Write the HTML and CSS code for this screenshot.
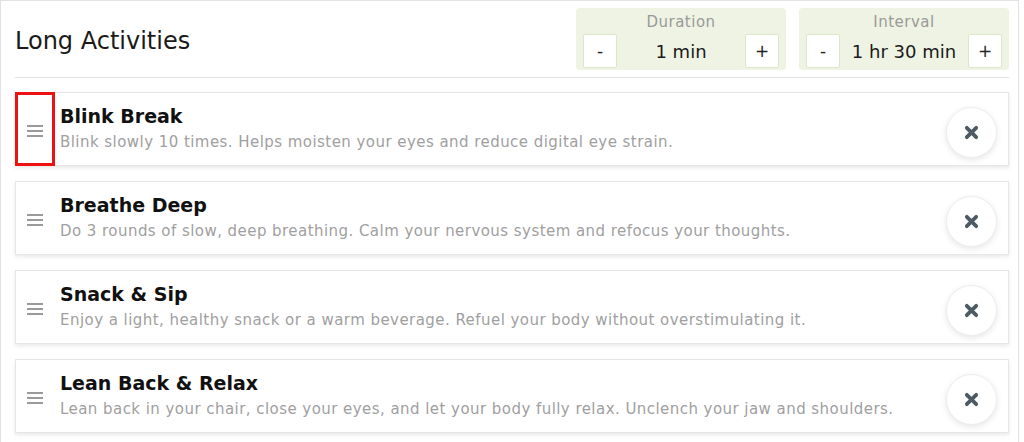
FILE: index.html
```html
<!DOCTYPE html>
<html lang="en">
<head>
<meta charset="utf-8">
<title>Long Activities</title>
<link rel="stylesheet" href="styles.css">
</head>
<body>
<section class="panel">
  <header class="panel-head">
    <h2 class="panel-title">Long Activities</h2>
    <div class="controls">
      <div class="stepper">
        <div class="stepper-label">Duration</div>
        <div class="stepper-row">
          <button class="step-btn">-</button>
          <span class="stepper-value">1 min</span>
          <button class="step-btn">+</button>
        </div>
      </div>
      <div class="stepper">
        <div class="stepper-label">Interval</div>
        <div class="stepper-row">
          <button class="step-btn">-</button>
          <span class="stepper-value">1 hr 30 min</span>
          <button class="step-btn">+</button>
        </div>
      </div>
    </div>
  </header>

  <ul class="activity-list">
    <li class="activity">
      <div class="handle is-focused"><span class="bars"></span></div>
      <div class="activity-body">
        <div class="activity-name">Blink Break</div>
        <div class="activity-desc">Blink slowly 10 times. Helps moisten your eyes and reduce digital eye strain.</div>
      </div>
      <button class="remove" aria-label="Remove">
        <svg viewBox="0 0 16 16" width="15" height="15"><path d="M3 3 L13 13 M13 3 L3 13" /></svg>
      </button>
    </li>
    <li class="activity">
      <div class="handle"><span class="bars"></span></div>
      <div class="activity-body">
        <div class="activity-name">Breathe Deep</div>
        <div class="activity-desc">Do 3 rounds of slow, deep breathing. Calm your nervous system and refocus your thoughts.</div>
      </div>
      <button class="remove" aria-label="Remove">
        <svg viewBox="0 0 16 16" width="15" height="15"><path d="M3 3 L13 13 M13 3 L3 13" /></svg>
      </button>
    </li>
    <li class="activity">
      <div class="handle"><span class="bars"></span></div>
      <div class="activity-body">
        <div class="activity-name">Snack &amp; Sip</div>
        <div class="activity-desc">Enjoy a light, healthy snack or a warm beverage. Refuel your body without overstimulating it.</div>
      </div>
      <button class="remove" aria-label="Remove">
        <svg viewBox="0 0 16 16" width="15" height="15"><path d="M3 3 L13 13 M13 3 L3 13" /></svg>
      </button>
    </li>
    <li class="activity">
      <div class="handle"><span class="bars"></span></div>
      <div class="activity-body">
        <div class="activity-name">Lean Back &amp; Relax</div>
        <div class="activity-desc">Lean back in your chair, close your eyes, and let your body fully relax. Unclench your jaw and shoulders.</div>
      </div>
      <button class="remove" aria-label="Remove">
        <svg viewBox="0 0 16 16" width="15" height="15"><path d="M3 3 L13 13 M13 3 L3 13" /></svg>
      </button>
    </li>
  </ul>
</section>
</body>
</html>
```

FILE: styles.css
```css
* { box-sizing: border-box; }

html, body {
  margin: 0;
  background: #fff;
  font-family: "DejaVu Sans", "Open Sans", sans-serif;
  color: #1a1a1a;
}

.panel {
  width: 1019px;
  min-height: 460px;
  border: 1px solid #e2e2e2;
  padding: 0 9px 0 14px;
}

/* header row: title on the left, steppers on the right */
.panel-head {
  display: flex;
  align-items: center;
  justify-content: space-between;
  padding: 7px 0 7px 0;
  border-bottom: 1px solid #e2e2e2;
}

.panel-title {
  margin: 3px 0 0;
  font-size: 24px;
  font-weight: 400;
  color: #1a1a1a;
}

.controls {
  display: flex;
  gap: 13px;
}

.stepper {
  width: 210px;
  height: 62px;
  background: #eef3e3;
  border-radius: 4px;
  padding: 3px 7px 2px;
  display: flex;
  flex-direction: column;
}

.stepper-label {
  height: 22px;
  line-height: 22px;
  text-align: center;
  font-size: 15px;
  letter-spacing: 0.5px;
  color: #9a9a9a;
}

.stepper-row {
  margin-top: 1px;
  display: flex;
  align-items: center;
  justify-content: space-between;
}

.step-btn {
  width: 34px;
  height: 34px;
  padding: 0;
  background: #fff;
  border: 1px solid #dce7c8;
  border-radius: 2px;
  font-family: inherit;
  font-size: 17px;
  color: #222;
  cursor: pointer;
}

.stepper-value {
  font-size: 18px;
  color: #1a1a1a;
}

/* activity cards */
.activity-list {
  list-style: none;
  margin: 14px 0 0;
  padding: 0;
  display: flex;
  flex-direction: column;
  gap: 15px;
}

.activity {
  display: flex;
  align-items: center;
  height: 74px;
  border: 1px solid #e6e6e6;
  background: #fff;
  box-shadow: 0 2px 4px rgba(0, 0, 0, 0.09);
  padding-right: 11px;
}

.handle {
  width: 38px;
  align-self: stretch;
  display: flex;
  align-items: center;
  justify-content: center;
  cursor: grab;
}

.handle.is-focused {
  outline: 3px solid #ee1111;
  outline-offset: -2px;
}

.bars {
  display: block;
  width: 16px;
  height: 12px;
  background:
    linear-gradient(#9a9a9a, #9a9a9a) 0 0 / 100% 2px no-repeat,
    linear-gradient(#9a9a9a, #9a9a9a) 0 5px / 100% 2px no-repeat,
    linear-gradient(#9a9a9a, #9a9a9a) 0 10px / 100% 2px no-repeat;
  margin-top: 4px;
}

.activity-body {
  flex: 1;
  padding-left: 6px;
  margin-top: -4px;
}

.activity-name {
  font-size: 19px;
  font-weight: 600;
  line-height: 27px;
  color: #111;
}

.activity-desc {
  margin-top: 2px;
  font-size: 15px;
  line-height: 20px;
  letter-spacing: 0.45px;
  color: #a0a0a0;
}

.remove {
  width: 51px;
  height: 51px;
  margin-top: 6px;
  border-radius: 50%;
  border: 1px solid #ededed;
  background: #fff;
  box-shadow: 0 2px 6px rgba(0, 0, 0, 0.1);
  display: flex;
  align-items: center;
  justify-content: center;
  padding: 0;
  cursor: pointer;
}

.remove svg path {
  stroke: #4c5a63;
  stroke-width: 4;
  stroke-linecap: round;
  fill: none;
}
```
